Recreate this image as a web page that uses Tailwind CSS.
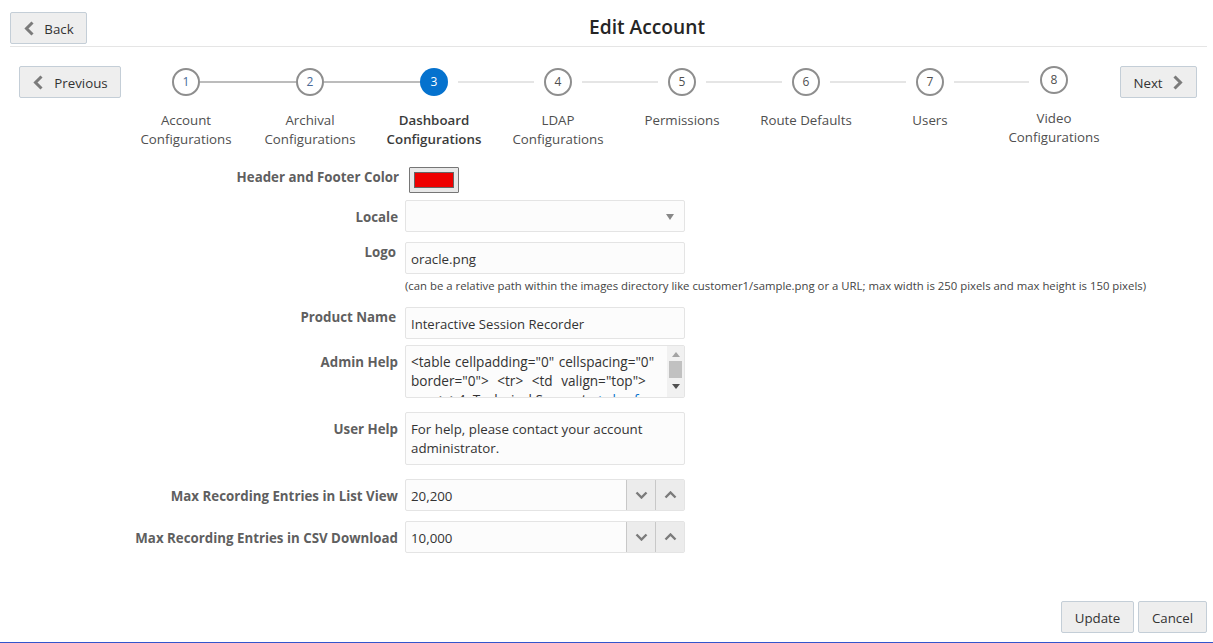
<!DOCTYPE html>
<html><head><meta charset="utf-8"><script src="https://cdn.jsdelivr.net/npm/@tailwindcss/browser@4"></script></head>
<body class="bg-white font-['Open_Sans','Noto_Sans',sans-serif] text-[13.3px] text-[#333] overflow-hidden">
<div class="relative h-[643px] w-[1213px] border-b border-[#3355cc]">
  <header class="mx-[10px] flex h-[47px] items-start border-b border-[#e5e5e5] pt-3 w-[1197px]">
    <button class="flex h-8 w-[77px] items-center justify-center gap-[9px] rounded-[2px] border border-[#c4ced7] bg-[#eeeeee] pt-[3px]">
      <svg class="-mt-[3px] h-[15px] w-[12px]" viewBox="0 0 12 15"><path d="M9.5 1.5 3.5 7.5l6 6" fill="none" stroke="#7b7b7b" stroke-width="3"/></svg><span>Back</span>
    </button>
    <h1 class="flex-1 pt-[2px] text-center text-[19.2px] leading-[26px] font-semibold text-[#252525]">Edit Account</h1>
  </header>
  <section class="mt-[19px] flex items-start pl-[19px]">
    <button class="flex h-8 w-[102px] shrink-0 items-center justify-center gap-[10px] rounded-[2px] border border-[#c4ced7] bg-[#eeeeee] pt-[3px]">
      <svg class="-mt-[3px] h-[15px] w-[12px]" viewBox="0 0 12 15"><path d="M9.5 1.5 3.5 7.5l6 6" fill="none" stroke="#7b7b7b" stroke-width="3"/></svg><span>Previous</span>
    </button>
    <ol class="ml-[3px] flex w-[992px] pt-[2px] text-center leading-[19px] text-[#4f4f4f]">
      <li class="w-[124px]"><div class="relative mx-auto h-7 w-7"><span class="absolute left-[28px] top-[13px] h-[2px] w-[96px] bg-[#bcbcbc]"></span><span class="flex h-7 w-7 items-center justify-center rounded-full border-2 border-[#8e8e8e] bg-white text-xs text-[#4a6a96]">1</span></div><p class="mt-[15px]">Account Configurations</p></li>
      <li class="w-[124px]"><div class="relative mx-auto h-7 w-7"><span class="absolute left-[28px] top-[13px] h-[2px] w-[96px] bg-[#bcbcbc]"></span><span class="flex h-7 w-7 items-center justify-center rounded-full border-2 border-[#8e8e8e] bg-white text-xs text-[#4a6a96]">2</span></div><p class="mt-[15px]">Archival Configurations</p></li>
      <li class="w-[124px]"><div class="relative mx-auto h-7 w-7"><span class="absolute left-[38px] top-[13px] h-[2px] w-[76px] bg-[#e5e5e5]"></span><span class="flex h-7 w-7 items-center justify-center rounded-full bg-[#0572ce] text-xs text-white">3</span></div><p class="mt-[15px] font-semibold text-[#3a3a3a]">Dashboard Configurations</p></li>
      <li class="w-[124px]"><div class="relative mx-auto h-7 w-7"><span class="absolute left-[38px] top-[13px] h-[2px] w-[76px] bg-[#e5e5e5]"></span><span class="flex h-7 w-7 items-center justify-center rounded-full border-2 border-[#8e8e8e] bg-white text-xs">4</span></div><p class="mt-[15px]">LDAP Configurations</p></li>
      <li class="w-[124px]"><div class="relative mx-auto h-7 w-7"><span class="absolute left-[38px] top-[13px] h-[2px] w-[76px] bg-[#e5e5e5]"></span><span class="flex h-7 w-7 items-center justify-center rounded-full border-2 border-[#8e8e8e] bg-white text-xs">5</span></div><p class="mt-[15px]">Permissions</p></li>
      <li class="w-[124px]"><div class="relative mx-auto h-7 w-7"><span class="absolute left-[38px] top-[13px] h-[2px] w-[76px] bg-[#e5e5e5]"></span><span class="flex h-7 w-7 items-center justify-center rounded-full border-2 border-[#8e8e8e] bg-white text-xs">6</span></div><p class="mt-[15px]">Route Defaults</p></li>
      <li class="w-[124px]"><div class="relative mx-auto h-7 w-7"><span class="absolute left-[38px] top-[13px] h-[2px] w-[75px] bg-[#e5e5e5]"></span><span class="flex h-7 w-7 items-center justify-center rounded-full border-2 border-[#8e8e8e] bg-white text-xs">7</span></div><p class="mt-[15px]">Users</p></li>
      <li class="w-[124px] -translate-y-[2px]"><div class="mx-auto h-7 w-7"><span class="flex h-7 w-7 items-center justify-center rounded-full border-2 border-[#8e8e8e] bg-white text-xs">8</span></div><p class="mt-[15px]">Video Configurations</p></li>
    </ol>
    <button class="ml-[4px] flex h-8 w-[77px] shrink-0 items-center justify-center gap-[9px] rounded-[2px] border border-[#c4ced7] bg-[#eeeeee] pt-[3px]">
      <span>Next</span><svg class="-mt-[3px] h-[15px] w-[12px]" viewBox="0 0 12 15"><path d="M2.5 1.5 8.5 7.5l-6 6" fill="none" stroke="#7b7b7b" stroke-width="3"/></svg>
    </button>
  </section>
  <form class="absolute left-0 top-[167px] w-full">
    <div class="flex h-[26px] items-start"><label class="w-[399px] text-right font-bold leading-5 text-[#5f5f5f]">Header and Footer Color</label><div class="ml-[10px] h-[26px] w-[50px] rounded-[1px] border border-[#767676] bg-[#e8e8e8] p-[4px]"><div class="h-full w-full border border-[#666] bg-[#ee0000]"></div></div></div>
    <div class="mt-[7px] flex h-8 items-center"><label class="w-[398px] pt-[3px] text-right font-bold text-[#5f5f5f]">Locale</label><div class="ml-[7px] flex h-8 w-[280px] items-center justify-end rounded-[2px] border border-[#e4e4e4] bg-[#fcfcfc] pr-[10px] pt-[2px]"><span class="h-0 w-0 border-x-[4.5px] border-t-[6px] border-x-transparent border-t-[#888]"></span></div></div>
    <div class="mt-[10px] flex h-8 items-start"><label class="w-[396px] text-right font-bold leading-5 text-[#5f5f5f]">Logo</label><div class="ml-[9px] flex h-8 w-[280px] items-center rounded-[2px] border border-[#e4e4e4] bg-[#fcfcfc] pl-[5px] pt-[3px]">oracle.png</div></div>
    <p class="ml-[405px] mt-[2px] h-[21px] text-[11.35px] leading-5 whitespace-nowrap text-[#444]">(can be a relative path within the images directory like customer1/sample.png or a URL; max width is 250 pixels and max height is 150 pixels)</p>
    <div class="mt-[10px] flex h-8 items-start"><label class="w-[396px] text-right font-bold leading-5 text-[#5f5f5f]">Product Name</label><div class="ml-[9px] flex h-8 w-[280px] items-center rounded-[2px] border border-[#e4e4e4] bg-[#fcfcfc] pl-[5px] pt-[3px] text-[13.1px]">Interactive Session Recorder</div></div>
    <div class="mt-[6px] flex h-[53px] items-start"><label class="w-[398px] pt-[7px] text-right font-bold leading-5 text-[#5f5f5f]">Admin Help</label><div class="relative ml-[7px] h-[53px] w-[280px] overflow-hidden rounded-[2px] border border-[#e4e4e4] bg-[#fcfcfc] pt-[6px] pl-[5px] pr-[17px] leading-[19px] text-[13.6px] whitespace-nowrap"><span class="[word-spacing:1px]">&lt;table cellpadding="0" cellspacing="0"</span><br><span class="[word-spacing:5px]">border="0"&gt; &lt;tr&gt; &lt;td valign="top"&gt;</span><br><span class="pl-[23px]">&lt;p&gt;4. Technical Support: <span class="text-[#0572ce]">&lt;a href</span></span>
      <div class="absolute right-0 top-0 flex h-[51px] w-[17px] flex-col items-center bg-[#f1f1f1] pt-[6px]"><span class="h-0 w-0 border-x-[4px] border-b-[5px] border-x-transparent border-b-[#a3a3a3]"></span><span class="mt-[4px] h-[17px] w-[13px] bg-[#c1c1c1]"></span><span class="mt-[6px] h-0 w-0 border-x-[4px] border-t-[5px] border-x-transparent border-t-[#505050]"></span></div></div></div>
    <div class="mt-[14px] flex h-[53px] items-start"><label class="w-[398px] pt-[7px] text-right font-bold leading-5 text-[#5f5f5f]">User Help</label><div class="ml-[7px] h-[53px] w-[280px] rounded-[2px] border border-[#e4e4e4] bg-[#fcfcfc] pt-[7px] pl-[5px] pr-2 leading-[19px]">For help, please contact your account administrator.</div></div>
    <div class="mt-[14px] flex h-8 items-center"><label class="w-[398px] pt-[3px] text-right font-bold text-[#5f5f5f]">Max Recording Entries in List View</label><div class="ml-[7px] flex h-8 w-[280px] items-stretch rounded-[2px] border border-[#e4e4e4] bg-[#fcfcfc]"><span class="flex flex-1 items-center pl-[5px] pt-[3px]">20,200</span><span class="flex w-[29px] items-center justify-center border-l border-[#c8c8c8] bg-[#ececec]"><svg class="h-[8px] w-[13px]" viewBox="0 0 13 8"><path d="M1.5 1.5l5 5 5-5" fill="none" stroke="#7b7b7b" stroke-width="2.4"/></svg></span><span class="flex w-[29px] items-center justify-center border-l border-[#c8c8c8] bg-[#ececec]"><svg class="h-[8px] w-[13px]" viewBox="0 0 13 8"><path d="M1.5 6.5l5-5 5 5" fill="none" stroke="#7b7b7b" stroke-width="2.4"/></svg></span></div></div>
    <div class="mt-[10px] flex h-8 items-center"><label class="w-[398px] pt-[3px] text-right font-bold text-[#5f5f5f]">Max Recording Entries in CSV Download</label><div class="ml-[7px] flex h-8 w-[280px] items-stretch rounded-[2px] border border-[#e4e4e4] bg-[#fcfcfc]"><span class="flex flex-1 items-center pl-[5px] pt-[3px]">10,000</span><span class="flex w-[29px] items-center justify-center border-l border-[#c8c8c8] bg-[#ececec]"><svg class="h-[8px] w-[13px]" viewBox="0 0 13 8"><path d="M1.5 1.5l5 5 5-5" fill="none" stroke="#7b7b7b" stroke-width="2.4"/></svg></span><span class="flex w-[29px] items-center justify-center border-l border-[#c8c8c8] bg-[#ececec]"><svg class="h-[8px] w-[13px]" viewBox="0 0 13 8"><path d="M1.5 6.5l5-5 5 5" fill="none" stroke="#7b7b7b" stroke-width="2.4"/></svg></span></div></div>
  </form>
  <footer class="absolute right-[6px] top-[601px] flex gap-1">
    <button class="h-8 w-[73px] rounded-[2px] border border-[#c4ced7] bg-[#eeeeee] pt-[3px]">Update</button>
    <button class="h-8 w-[69px] rounded-[2px] border border-[#c4ced7] bg-[#eeeeee] pt-[3px]">Cancel</button>
  </footer>
</div>
</body></html>
